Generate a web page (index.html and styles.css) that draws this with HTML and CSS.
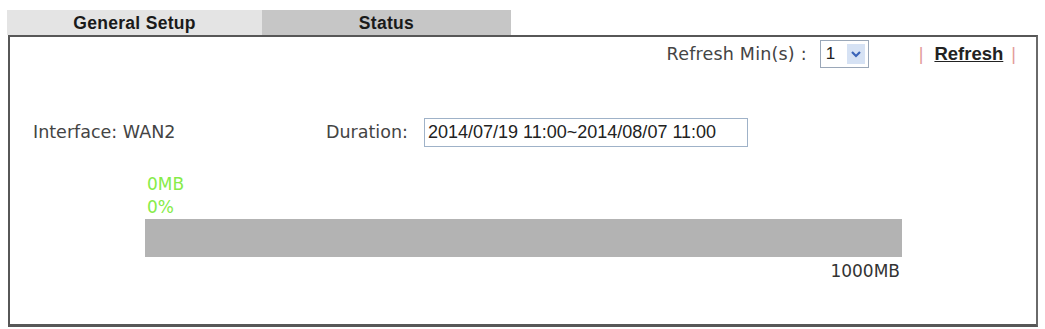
FILE: index.html
```html
<!DOCTYPE html>
<html>
<head>
<meta charset="utf-8">
<link rel="stylesheet" href="styles.css">
</head>
<body>
<div class="tabs">
  <div class="tab tab-general">General Setup</div>
  <div class="tab tab-status">Status</div>
</div>
<div class="panel">
  <div class="toolbar">
    <span class="refresh-label">Refresh Min(s) :</span>
    <span class="select"><span class="select-val">1</span><span class="select-btn"><svg width="12" height="10" viewBox="0 0 12 10"><path d="M2 3 L6 7 L10 3" fill="none" stroke="#3b64b8" stroke-width="2.2"/></svg></span></span>
    <span class="pipe pipe-left">|</span>
    <a class="refresh-link">Refresh</a>
    <span class="pipe">|</span>
  </div>
  <div class="info-row">
    <span class="iface">Interface: WAN2</span>
    <span class="dur-label">Duration:</span>
    <span class="dur-input">2014/07/19 11:00~2014/08/07 11:00</span>
  </div>
  <div class="usage">
    <div class="green">0MB</div>
    <div class="green">0%</div>
    <div class="bar"></div>
    <div class="limit">1000MB</div>
  </div>
</div>
</body>
</html>
```
FILE: styles.css
```css
html, body {
  margin: 0;
  padding: 0;
  background: #ffffff;
}
body {
  font-family: "DejaVu Sans", Verdana, sans-serif;
  color: #333333;
}
.tabs {
  display: flex;
  margin: 10px 0 0 7px;
}
.tab {
  width: 255px;
  height: 25px;
  line-height: 26px;
  text-align: center;
  font-family: "Liberation Sans", Arial, sans-serif;
  font-weight: bold;
  font-size: 17.5px;
  letter-spacing: 0.3px;
  color: #1a1a1a;
}
.tab-general {
  background: #e4e4e4;
}
.tab-status {
  background: #c6c6c6;
  width: 249px;
}
.panel {
  margin: 0 0 0 8px;
  width: 1026px;
  height: 287px;
  border: 2px solid #575757;
  border-bottom-width: 3px;
  border-right-color: #6a6a6a;
}
.toolbar {
  display: flex;
  justify-content: flex-end;
  align-items: center;
  height: 34px;
  padding-right: 20px;
  font-size: 17.5px;
  color: #444;
}
.refresh-label {
  margin-right: 13px;
  letter-spacing: 0.2px;
}
.select {
  display: flex;
  align-items: center;
  justify-content: space-between;
  border: 1px solid #9aa7b8;
  box-sizing: border-box;
  width: 49px;
  height: 28px;
  padding: 0 3px 0 5px;
  font-family: "Liberation Sans", Arial, sans-serif;
  font-size: 17px;
  color: #222;
}
.select-btn {
  display: flex;
  align-items: center;
  justify-content: center;
  width: 18px;
  height: 20px;
  background: #d6e2f4;
}
.pipe {
  color: #e39a9a;
  font-family: "Liberation Sans", Arial, sans-serif;
  font-size: 18px;
}
.pipe-left {
  margin-left: 50px;
  margin-right: 11px;
}
.refresh-link {
  font-family: "Liberation Sans", Arial, sans-serif;
  font-weight: bold;
  font-size: 18.5px;
  color: #222;
  text-decoration: underline;
  margin-right: 8px;
}
.info-row {
  display: flex;
  align-items: center;
  margin-top: 46px;
  height: 30px;
  padding-left: 23px;
  font-size: 17.5px;
  color: #444;
}
.iface {
  width: 293px;
}
.dur-label {
  width: 98px;
}
.dur-input {
  box-sizing: border-box;
  width: 324px;
  height: 29px;
  line-height: 27px;
  border: 1px solid #9fb2c8;
  padding-left: 3px;
  font-family: "Liberation Sans", Arial, sans-serif;
  font-size: 18px;
  color: #222;
}
.usage {
  margin-top: 26px;
  padding-left: 135px;
  width: 757px;
}
.green {
  color: #86ec48;
  font-size: 17px;
  line-height: 23px;
  padding-left: 2px;
}
.bar {
  height: 38px;
  background: #b3b3b3;
}
.limit {
  text-align: right;
  font-size: 17px;
  color: #333;
  padding-right: 2px;
  margin-top: 4px;
}
```
